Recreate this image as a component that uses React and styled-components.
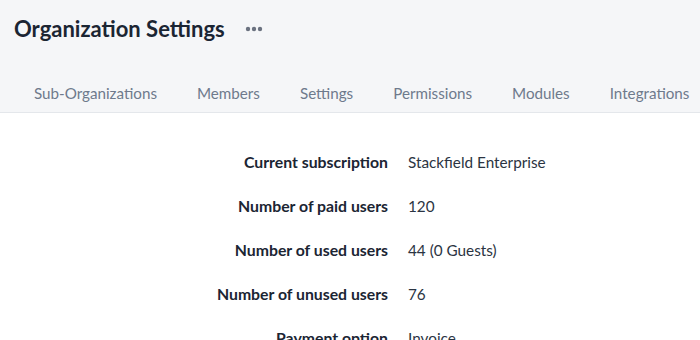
import styled, { createGlobalStyle } from "styled-components";

const tabs = [
  "Sub-Organizations",
  "Members",
  "Settings",
  "Permissions",
  "Modules",
  "Integrations",
];

const details = [
  { label: "Current subscription", value: "Stackfield Enterprise" },
  { label: "Number of paid users", value: "120" },
  { label: "Number of used users", value: "44 (0 Guests)" },
  { label: "Number of unused users", value: "76" },
  { label: "Payment option", value: "Invoice" },
];

const App = () => {
  return (
    <>
      <GlobalStyle />
      <Page>
        <Header>
          <TitleRow>
            <Title>Organization Settings</Title>
            <MoreButton aria-label="More">
              <svg width="18" height="6" viewBox="0 0 18 6">
                <circle cx="3" cy="3" r="2.2" fill="#6b7280" />
                <circle cx="9" cy="3" r="2.2" fill="#6b7280" />
                <circle cx="15" cy="3" r="2.2" fill="#6b7280" />
              </svg>
            </MoreButton>
          </TitleRow>
          <TabBar>
            {tabs.map((tab) => (
              <Tab key={tab}>{tab}</Tab>
            ))}
          </TabBar>
        </Header>
        <Content>
          <DetailGrid>
            {details.map((item) => (
              <Row key={item.label}>
                <Label>{item.label}</Label>
                <Value>{item.value}</Value>
              </Row>
            ))}
          </DetailGrid>
        </Content>
      </Page>
    </>
  );
};

const GlobalStyle = createGlobalStyle`
  html, body {
    margin: 0;
    padding: 0;
    background: #ffffff;
    font-family: "Lato", "Noto Sans", sans-serif;
  }
`;

const Page = styled.div`
  width: 700px;
  height: 340px;
  overflow: hidden;
  background: #ffffff;
`;

const Header = styled.div`
  background: #f5f6f8;
  border-bottom: 1px solid #e4e7eb;
  padding: 14px 0 0 14px;
`;

const TitleRow = styled.div`
  display: flex;
  align-items: center;
  height: 30px;
`;

const Title = styled.h1`
  margin: 0;
  font-size: 22px;
  font-weight: 700;
  color: #1b2533;
  line-height: 30px;
`;

const MoreButton = styled.button`
  border: none;
  background: none;
  padding: 0;
  margin-left: 20px;
  display: flex;
  align-items: center;
  cursor: pointer;
`;

const TabBar = styled.nav`
  display: flex;
  margin-top: 30px;
  white-space: nowrap;
`;

const Tab = styled.div`
  padding: 7px 20px 7px;
  font-size: 15.2px;
  line-height: 24px;
  color: #6e7a8c;
  cursor: pointer;
`;

const Content = styled.div`
  padding-top: 37px;
`;

const DetailGrid = styled.div`
  display: grid;
  row-gap: 20px;
`;

const Row = styled.div`
  display: grid;
  grid-template-columns: 388px 1fr;
  column-gap: 20px;
  line-height: 24px;
`;

const Label = styled.div`
  text-align: right;
  font-size: 15.8px;
  font-weight: 700;
  color: #1b2533;
`;

const Value = styled.div`
  font-size: 15.3px;
  color: #2b3442;
`;

export default App;
